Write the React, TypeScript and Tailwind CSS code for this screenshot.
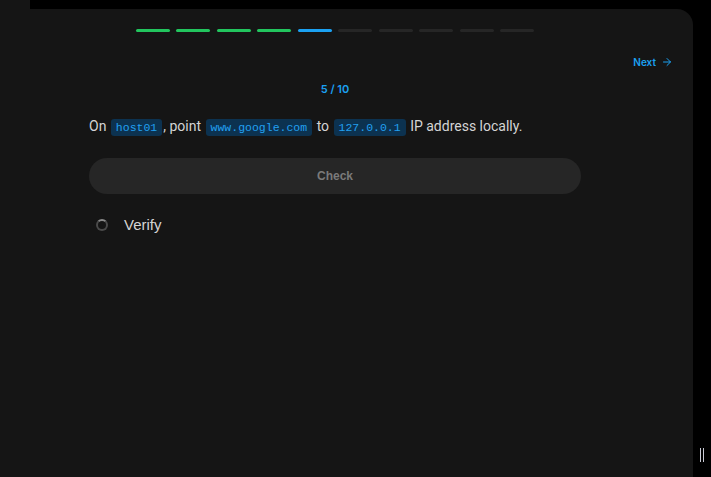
import React from 'react';
import { ArrowRight } from 'lucide-react';

const STEPS = 10;
const CURRENT = 5;

const Code: React.FC<{ children: React.ReactNode }> = ({ children }) => (
  <code className="mx-[1px] rounded-[3px] bg-[#0c3250] px-[5px] py-[2px] font-['Liberation_Mono',monospace] text-[11.5px] text-[#22a0f0]">
    {children}
  </code>
);

const App: React.FC = () => {
  return (
    <div className="flex h-[477px] w-[711px] overflow-hidden bg-black font-['Inter',sans-serif]">
      {/* left rail */}
      <div className="h-full w-[30px] bg-[#151515]" />

      <main className="mt-[9px] flex h-[468px] w-[663px] flex-col rounded-tr-[16px] bg-[#151515] pl-[59px] pr-[20px]">
        {/* progress */}
        <div className="mt-[20px] flex w-[492px] justify-center gap-[6.5px]">
          {Array.from({ length: STEPS }).map((_, i) => (
            <div
              key={i}
              className={
                'h-[3px] w-[34px] rounded-full ' +
                (i < CURRENT - 1 ? 'bg-[#22c55e]' : i === CURRENT - 1 ? 'bg-[#1ba1f2]' : 'bg-[#262626]')
              }
            />
          ))}
        </div>

        <div className="mt-[23px] flex justify-end">
          <button className="flex items-center gap-[5px] text-[10px] font-semibold leading-[14px] text-[#1ba1f2]">
            Next
            <ArrowRight size={12} strokeWidth={2} />
          </button>
        </div>

        <div className="w-[492px]">
          <div className="mt-[13px] text-center text-[11px] font-semibold leading-[14px] text-[#1ba1f2]">
            {CURRENT} / {STEPS}
          </div>

          <p className="mt-[18px] font-['Roboto',sans-serif] text-[14px] leading-[24px] text-[#d4d4d4]">
            On <Code>host01</Code>, point <Code>www.google.com</Code> to <Code>127.0.0.1</Code> IP address locally.
          </p>

          <button className="mt-[18px] h-[36px] w-full rounded-full bg-[#262626] font-['Liberation_Sans',sans-serif] text-[12px] font-bold text-[#7a7a7a]">
            Check
          </button>

          <div className="mt-[20px] flex items-center">
            <span className="ml-[7px] h-[12px] w-[12px] rounded-full border-2 border-[#4a4a4a] border-t-[#8a8a8a]" />
            <span className="ml-[16px] font-['Liberation_Sans',sans-serif] text-[15px] text-[#d4d4d4]">Verify</span>
          </div>
        </div>
      </main>

      {/* resize handle */}
      <div className="flex h-full w-[18px] items-end justify-center pb-[15px]">
        <div className="flex h-[14px] gap-[1.5px]">
          <div className="h-full w-[1.5px] bg-[#c9cad4]" />
          <div className="h-full w-[1.5px] bg-[#c9cad4]" />
        </div>
      </div>
    </div>
  );
};

export default App;
